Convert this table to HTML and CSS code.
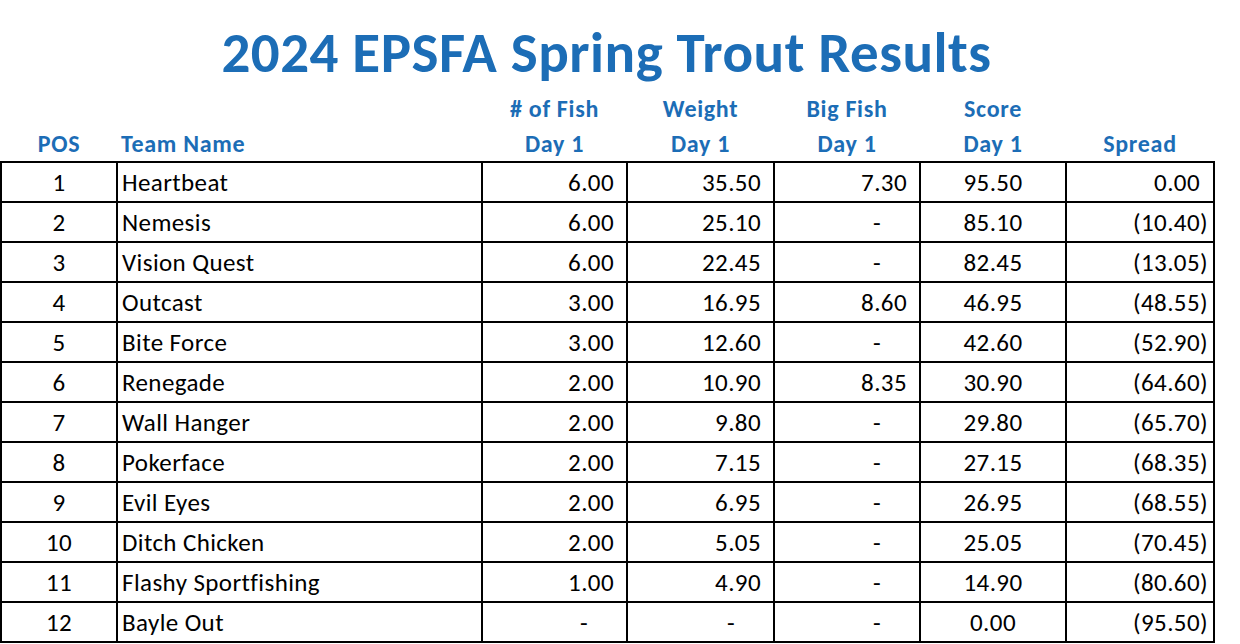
FILE: index.html
```html
<!DOCTYPE html>
<html lang="en">
<head>
<meta charset="utf-8">
<title>2024 EPSFA Spring Trout Results</title>
<link rel="stylesheet" href="styles.css">
</head>
<body>
<div class="sheet">
  <h1 class="title">2024 EPSFA Spring Trout Results</h1>
  <table class="results">
    <colgroup>
      <col class="w-pos">
      <col class="w-team">
      <col class="w-fish">
      <col class="w-weight">
      <col class="w-big">
      <col class="w-score">
      <col class="w-spread">
    </colgroup>
    <thead>
      <tr>
        <th class="center">POS</th>
        <th class="left">Team Name</th>
        <th class="center"># of Fish<br>Day 1</th>
        <th class="center">Weight<br>Day 1</th>
        <th class="center">Big Fish<br>Day 1</th>
        <th class="center">Score<br>Day 1</th>
        <th class="center">Spread</th>
      </tr>
    </thead>
    <tbody>
      <tr><td class="pos">1</td><td class="team">Heartbeat</td><td class="num">6.00</td><td class="num">35.50</td><td class="num">7.30</td><td class="score">95.50</td><td class="spread">0.00<span class="ghost">)</span></td></tr>
      <tr><td class="pos">2</td><td class="team">Nemesis</td><td class="num">6.00</td><td class="num">25.10</td><td class="num dash">-</td><td class="score">85.10</td><td class="spread">(10.40)</td></tr>
      <tr><td class="pos">3</td><td class="team">Vision Quest</td><td class="num">6.00</td><td class="num">22.45</td><td class="num dash">-</td><td class="score">82.45</td><td class="spread">(13.05)</td></tr>
      <tr><td class="pos">4</td><td class="team">Outcast</td><td class="num">3.00</td><td class="num">16.95</td><td class="num">8.60</td><td class="score">46.95</td><td class="spread">(48.55)</td></tr>
      <tr><td class="pos">5</td><td class="team">Bite Force</td><td class="num">3.00</td><td class="num">12.60</td><td class="num dash">-</td><td class="score">42.60</td><td class="spread">(52.90)</td></tr>
      <tr><td class="pos">6</td><td class="team">Renegade</td><td class="num">2.00</td><td class="num">10.90</td><td class="num">8.35</td><td class="score">30.90</td><td class="spread">(64.60)</td></tr>
      <tr><td class="pos">7</td><td class="team">Wall Hanger</td><td class="num">2.00</td><td class="num">9.80</td><td class="num dash">-</td><td class="score">29.80</td><td class="spread">(65.70)</td></tr>
      <tr><td class="pos">8</td><td class="team">Pokerface</td><td class="num">2.00</td><td class="num">7.15</td><td class="num dash">-</td><td class="score">27.15</td><td class="spread">(68.35)</td></tr>
      <tr><td class="pos">9</td><td class="team">Evil Eyes</td><td class="num">2.00</td><td class="num">6.95</td><td class="num dash">-</td><td class="score">26.95</td><td class="spread">(68.55)</td></tr>
      <tr><td class="pos">10</td><td class="team">Ditch Chicken</td><td class="num">2.00</td><td class="num">5.05</td><td class="num dash">-</td><td class="score">25.05</td><td class="spread">(70.45)</td></tr>
      <tr><td class="pos">11</td><td class="team">Flashy Sportfishing</td><td class="num">1.00</td><td class="num">4.90</td><td class="num dash">-</td><td class="score">14.90</td><td class="spread">(80.60)</td></tr>
      <tr><td class="pos">12</td><td class="team">Bayle Out</td><td class="num dash">-</td><td class="num dash">-</td><td class="num dash">-</td><td class="score">0.00</td><td class="spread">(95.50)</td></tr>
    </tbody>
  </table>
</div>
</body>
</html>
```

FILE: styles.css
```css
html, body {
  margin: 0;
  padding: 0;
  background: #ffffff;
}

body {
  font-family: Carlito, Calibri, Lato, "Open Sans", sans-serif;
  color: #000000;
}

.sheet {
  width: 1213px;
}

.title {
  margin: 0;
  padding-top: 20px;
  height: 66px;
  line-height: 66px;
  text-align: center;
  font-size: 57px;
  font-weight: 700;
  letter-spacing: 0.5px;
  color: #1c6db6;
  white-space: nowrap;
}

.results {
  margin-top: 5px;
  width: 1213px;
  border-collapse: collapse;
  table-layout: fixed;
}

.w-pos { width: 116px; }
.w-team { width: 365px; }
.w-fish { width: 145px; }
.w-weight { width: 147px; }
.w-big { width: 146px; }
.w-score { width: 146px; }
.w-spread { width: 148px; }

.results th {
  padding: 0;
  font-size: 24px;
  font-weight: 700;
  letter-spacing: 0.7px;
  line-height: 35px;
  color: #1c6db6;
  vertical-align: bottom;
  white-space: nowrap;
}

.results th.center { text-align: center; }
.results th.left { text-align: left; padding-left: 4px; }

.results tbody tr {
  height: 40px;
}

.results td {
  border: 2px solid #000000;
  padding: 0;
  font-size: 25px;
  letter-spacing: 0.4px;
  line-height: 28px;
  vertical-align: bottom;
  padding-bottom: 4px;
  white-space: nowrap;
}

.results td.pos { text-align: center; }
.results td.team { text-align: left; padding-left: 4px; }
.results td.num { text-align: right; padding-right: 12px; }
.results td.num.dash { padding-right: 38px; }
.results td.score { text-align: center; }
.results td.spread { text-align: right; padding-right: 5px; }

.ghost { visibility: hidden; }
```
